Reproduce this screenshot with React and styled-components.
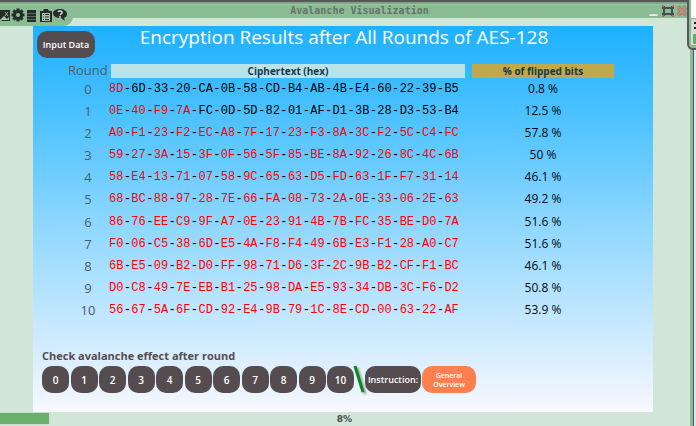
import React from "react";
import styled, { createGlobalStyle, css } from "styled-components";

const sans = `"Open Sans", "Noto Sans", sans-serif`;
const dark = "#554c50";

const GlobalStyle = createGlobalStyle`
  *, *::before, *::after { box-sizing: border-box; }
  body { margin: 0; background: #dde5f3; font-family: ${sans}; color: #554c50; }
  button { font-family: inherit; }
`;

const Desktop = styled.div`
  position: relative;
  min-height: 100vh;
  padding-right: 2px;
  display: flex;
  overflow: hidden;
`;

const Window = styled.main`
  flex: 1;
  min-width: 0;
  display: flex;
  flex-direction: column;
  background: #d2e6d8;
  border-top: 2px solid #555759;
  border-right: 1px solid #505359;
  box-shadow: inset -3px 0 0 #87bb92;
`;

const TitleBar = styled.header`
  position: relative;
  height: 16px;
  display: flex;
  align-items: center;
  justify-content: flex-end;
  background: #8abd93;
  border-top: 2px solid #7da888;
  box-shadow: inset 0 1px 0 #9cc9a4;
`;

const WindowTitle = styled.h1`
  flex: 1;
  margin: 0 0 0 70px;
  font: bold 10px/14px "DejaVu Sans Mono", monospace;
  text-align: center;
  color: #66736a;
`;

const WindowControls = styled.div`
  display: flex;
  align-items: center;
  gap: 2px;
  margin-right: 6px;
`;

const ControlButton = styled.button`
  border: 0;
  padding: 0;
  background: none;
  display: block;
  height: 14px;
  svg { display: block; }
`;

const Tools = styled.nav`
  position: absolute;
  left: 0;
  top: 4px;
  height: 18px;
  width: 73px;
  display: flex;
  background: #8abd93;
  border-radius: 0 0 9px 0;
  svg { display: block; }
`;

const Panel = styled.section`
  flex: 1;
  margin: 8px 40px 0 33px;
  padding: 0 39px 19px 4px;
  display: flex;
  flex-direction: column;
  background: linear-gradient(#1eb0ff, #50c3ff 25%, #8bd6ff 50%, #cdeaff 80%, #f8f8ff);
`;

const PanelHead = styled.div`
  display: flex;
  align-items: flex-start;
  height: 37px;
`;

const Heading = styled.h2`
  flex: 1;
  margin: 0;
  padding-right: 21px;
  text-align: center;
  white-space: nowrap;
  font-size: 19px;
  line-height: 23px;
  font-weight: 400;
  color: #fff;
`;

const DarkButton = styled.button`
  height: 27px;
  width: ${(p) => p.$width}px;
  padding: 0 2px;
  border: 0;
  border-radius: 10px;
  background: ${dark};
  color: #fff;
  font-size: ${(p) => p.$size || 10}px;
  line-height: 14px;
  font-weight: 600;
  white-space: nowrap;
`;

const InputButton = styled(DarkButton)`
  margin-top: 5px;
`;

const Results = styled.table`
  width: 100%;
  height: 258px;
  table-layout: fixed;
  border-collapse: collapse;
  td, th { padding: 0; }
`;

const RoundHead = styled.th`
  width: 74px;
  height: 15px;
  text-align: right;
  font-size: 13px;
  line-height: 15px;
  font-weight: 400;
  color: #4f5c66;
`;

const ColumnHead = styled.th`
  width: ${(p) => p.$width};
  height: 15px;
  font-size: 10px;
  line-height: 14px;
  font-weight: 700;
  color: #17384c;
  span { display: block; background: ${(p) => p.$fill}; }
`;

const Gap = styled.th`
  width: ${(p) => p.$width}px;
`;

const RoundCell = styled.td`
  text-align: center;
  font-size: 13px;
  line-height: 18px;
  color: #4f5c66;
  span { display: block; padding-left: 28px; }
`;

const HexCell = styled.td`
  font: 12px/16px "Liberation Mono", monospace;
  color: #000;
`;

const HexLine = styled.div`
  display: flex;
  justify-content: space-between;
  margin: 0 6px 0 -2px;
`;

const Byte = styled.span`
  ${(p) => p.$changed && css`color: #ff0000;`}
`;

const PercentCell = styled.td`
  text-align: center;
  font-size: 12px;
  line-height: 18px;
  color: #05090c;
`;

const Check = styled.div`
  margin-top: auto;
  padding-left: 5px;
`;

const CheckLabel = styled.h3`
  margin: 0 0 2px;
  font-size: 11px;
  line-height: 16px;
  font-weight: 700;
  color: ${dark};
`;

const ButtonRow = styled.div`
  display: flex;
  align-items: center;
  gap: 1px;
`;

const Rounds = styled.div`
  width: 312px;
  display: flex;
  justify-content: space-between;
`;

const Slash = styled.svg`
  flex: none;
  overflow: visible;
  filter: drop-shadow(2px 2px 1px rgba(60, 70, 60, 0.5));
`;

const OverviewButton = styled(DarkButton)`
  background: #ff7f50;
  line-height: 9px;
  white-space: normal;
`;

const Status = styled.footer`
  position: relative;
  height: 14px;
  padding-right: 4px;
  display: flex;
  align-items: center;
  justify-content: center;
  font: bold 9px/12px "DejaVu Sans", sans-serif;
  color: #454c48;
`;

const Progress = styled.div`
  position: absolute;
  left: 0;
  top: 1px;
  height: 11px;
  width: 49px;
  border-radius: 0 1px 1px 0;
  background: #6ab06c;
  box-shadow: 0 0 1px #7e9c82;
`;

const SideWindow = styled.aside`
  position: absolute;
  top: 0;
  right: -12px;
  width: 21px;
  height: 50px;
  border: 2px solid #55595a;
  border-top: 0;
  border-radius: 0 0 6px 6px;
  background: #87bb92;
  padding-left: 2px;
`;

const SideContent = styled.div`
  height: 45px;
  background: linear-gradient(#fff 18px, #99a39c 18px, #d8dad9 20px);
  svg { display: block; }
`;

const rows = [
  ["8D-6D-33-20-CA-0B-58-CD-B4-AB-4B-E4-60-22-39-B5", 1, "0.8 %"],
  ["0E-40-F9-7A-FC-0D-5D-82-01-AF-D1-3B-28-D3-53-B4", 4, "12.5 %"],
  ["A0-F1-23-F2-EC-A8-7F-17-23-F3-8A-3C-F2-5C-C4-FC", 16, "57.8 %"],
  ["59-27-3A-15-3F-0F-56-5F-85-BE-8A-92-26-8C-4C-6B", 16, "50 %"],
  ["58-E4-13-71-07-58-9C-65-63-D5-FD-63-1F-F7-31-14", 16, "46.1 %"],
  ["68-BC-88-97-28-7E-66-FA-08-73-2A-0E-33-06-2E-63", 16, "49.2 %"],
  ["86-76-EE-C9-9F-A7-0E-23-91-4B-7B-FC-35-BE-D0-7A", 16, "51.6 %"],
  ["F0-06-C5-38-6D-E5-4A-F8-F4-49-6B-E3-F1-28-A0-C7", 16, "51.6 %"],
  ["6B-E5-09-B2-D0-FF-98-71-D6-3F-2C-9B-B2-CF-F1-BC", 16, "46.1 %"],
  ["D0-C8-49-7E-EB-B1-25-98-DA-E5-93-34-DB-3C-F6-D2", 16, "50.8 %"],
  ["56-67-5A-6F-CD-92-E4-9B-79-1C-8E-CD-00-63-22-AF", 16, "53.9 %"],
];

function CipherText({ hex, changed }) {
  return (
    <HexLine>
      {hex.split("-").map((byte, i) => (
        <React.Fragment key={i}>
          {i > 0 && <span>-</span>}
          <Byte $changed={i < changed}>{byte}</Byte>
        </React.Fragment>
      ))}
    </HexLine>
  );
}

function ToolIcons() {
  return (
    <svg width="70" height="16" viewBox="0 0 70 16" fill="#272c2a" aria-hidden="true">
      <path d="M0 2h10v11h-8l-2-2z" />
      <path d="M0 12l4-4 3 3 2-2v3z" fill="#a9c4ae" />
      <path d="M5 4l3 4M8 4L5 8" stroke="#8fa596" />
      <g transform="translate(18 7)">
        {[0, 45, 90, 135].map((a) => (
          <rect key={a} x="-1.5" y="-6.500" width="3" height="13" transform={`rotate(${a})`} />
        ))}
        <circle r="5" />
        <circle r="2" fill="#8abd93" />
      </g>
      <path d="M27 2h9v12h-9z" />
      <path d="M27 5.500h9M27 8.500h9M27 11.500h9" stroke="#596a5e" />
      <path d="M40 3h3l1-2h4l1 2h3v11H40z" />
      <path d="M42 5h8v8h-8z" fill="#a9c4ae" />
      <path d="M43 6.500h1M45 6.500h4M43 9h1M45 9h4M43 11.500h1M45 11.500h4" stroke="#272c2a" />
      <path d="M60 1c4 0 7 2 7 5 0 2-1 3-3 4l1 3-4-3c-5 0-8-2-8-5 0-2 3-4 7-4z" />
      <path d="M58 4c1-2 5-1 4 1l-2 2" fill="none" stroke="#cbd6cd" strokeWidth="1.500" />
      <circle cx="60" cy="9" r="1" fill="#cbd6cd" />
    </svg>
  );
}

export default function App() {
  return (
    <>
      <GlobalStyle />
      <Desktop>
        <Window>
          <TitleBar>
            <WindowTitle>Avalanche Visualization</WindowTitle>
            <Tools aria-label="Tools">
              <ToolIcons />
            </Tools>
            <WindowControls>
              <ControlButton aria-label="Minimize">
                <svg width="10" height="14">
                  <rect y="10" width="9" height="2" fill="#fff" stroke="#8b958e" strokeWidth="0.500" />
                </svg>
              </ControlButton>
              <ControlButton aria-label="Maximize">
                <svg width="14" height="14">
                  <path d="M3 4h8v6H3zM1 3h3M10 3h3M1 11h3M10 11h3M2 2v3M12 2v3M2 9v3M12 9v3" fill="none" stroke="#484d50" strokeWidth="2" />
                  <path d="M1 1h2v2H1zM11 1h2v2h-2zM1 11h2v2H1zM11 11h2v2h-2z" fill="#dc5864" />
                </svg>
              </ControlButton>
              <ControlButton aria-label="Close">
                <svg width="10" height="14">
                  <path d="M1 3l8 8M9 3l-8 8" stroke="#7c766a" strokeWidth="4" />
                  <path d="M1 3l8 8M9 3l-8 8" stroke="#c78a79" strokeWidth="3" />
                </svg>
              </ControlButton>
            </WindowControls>
          </TitleBar>

          <Panel>
            <PanelHead>
              <InputButton $width={58} $size={9}>Input Data</InputButton>
              <Heading>Encryption Results after All Rounds of AES-128</Heading>
            </PanelHead>

            <Results>
              <thead>
                <tr>
                  <RoundHead scope="col">Round&nbsp;</RoundHead>
                  <ColumnHead scope="col" $width="auto" $fill="#bae3e8">
                    <span>Ciphertext (hex)</span>
                  </ColumnHead>
                  <Gap $width={7} />
                  <ColumnHead scope="col" $width="142px" $fill="#c0a84c">
                    <span>% of flipped bits</span>
                  </ColumnHead>
                </tr>
              </thead>
              <tbody>
                {rows.map(([hex, changed, percent], i) => (
                  <tr key={hex}>
                    <RoundCell>
                      <span>{i}</span>
                    </RoundCell>
                    <HexCell>
                      <CipherText hex={hex} changed={changed} />
                    </HexCell>
                    <td />
                    <PercentCell>{percent}</PercentCell>
                  </tr>
                ))}
              </tbody>
            </Results>

            <Check>
              <CheckLabel>Check avalanche effect after round</CheckLabel>
              <ButtonRow>
                <Rounds>
                  {rows.map((row, i) => (
                    <DarkButton key={row[0]} $width={27}>
                      {i}
                    </DarkButton>
                  ))}
                </Rounds>
                <Slash width="9" height="27" viewBox="0 0 9 27" aria-hidden="true">
                  <path d="M0 0l8 26" stroke="#078a16" strokeWidth="3" />
                </Slash>
                <DarkButton $width={56} $size={9}>Instruction:</DarkButton>
                <OverviewButton $width={54} $size={7}>General Overview</OverviewButton>
              </ButtonRow>
            </Check>
          </Panel>

          <Status>
            <Progress role="progressbar" aria-label="Progress" aria-valuenow={8} />
            8%
          </Status>
        </Window>
        <SideWindow>
          <SideContent>
            <svg width="15" height="45" aria-hidden="true">
              <path d="M3 23h5M3 28h4" stroke="#222" strokeWidth="2" />
              <rect x="2" y="34" width="13" height="10" rx="1" fill="#5fae66" />
            </svg>
          </SideContent>
        </SideWindow>
      </Desktop>
    </>
  );
}
